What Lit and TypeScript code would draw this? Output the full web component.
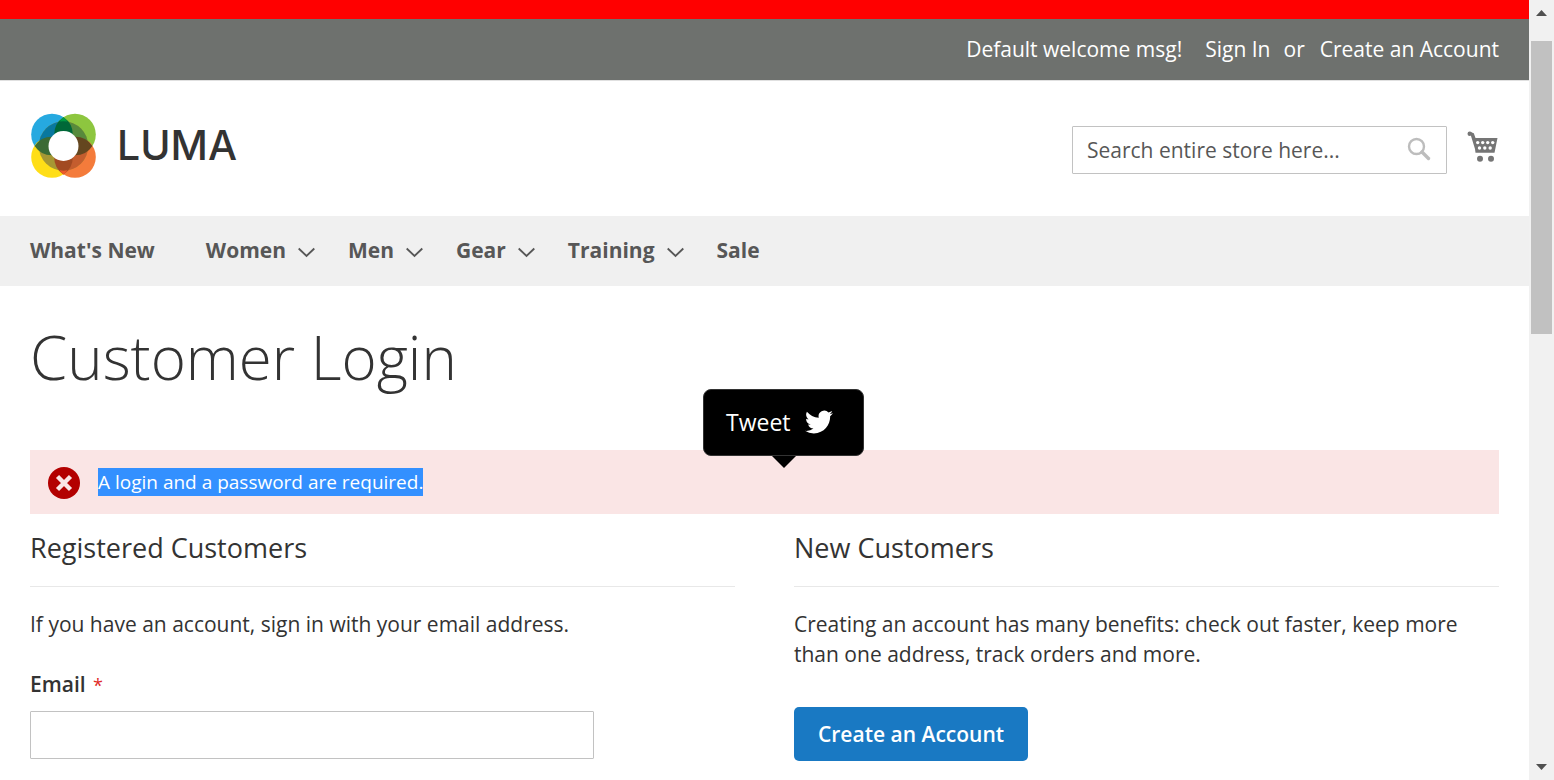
import { LitElement, html, css, nothing } from "lit";
import { customElement } from "lit/decorators.js";

interface NavEntry {
  label: string;
  submenu: boolean;
}

const NAV: NavEntry[] = [
  { label: "What's New", submenu: false },
  { label: "Women", submenu: true },
  { label: "Men", submenu: true },
  { label: "Gear", submenu: true },
  { label: "Training", submenu: true },
  { label: "Sale", submenu: false },
];

@customElement("luma-header")
export class LumaHeader extends LitElement {
  static styles = css`
    :host {
      display: block;
    }
    a {
      color: inherit;
      text-decoration: none;
    }
    .notice {
      height: 19px;
      background: #ff0000;
    }
    .panel {
      display: flex;
      justify-content: flex-end;
      align-items: center;
      box-sizing: border-box;
      height: 62px;
      padding: 0 30px 2px;
      background: #6e716e;
      border-bottom: 1px solid #e0e0e0;
      color: #fff;
      line-height: 30px;
    }
    .welcome {
      margin-right: 23px;
    }
    .or {
      margin: 0 15px 0 13px;
    }
    .brand-row {
      display: flex;
      align-items: center;
      height: 135px;
      padding: 0 30px;
    }
    .logo {
      display: block;
      margin: 2px auto 0 0;
    }
    .wordmark {
      font-family: Inter, sans-serif;
      font-size: 41px;
      font-weight: 500;
      fill: #333;
    }
    .search {
      display: flex;
      align-items: center;
      box-sizing: border-box;
      width: 375px;
      height: 48px;
      margin: 2px 20px 0 0;
      border: 1px solid #c2c2c2;
      border-radius: 1px;
    }
    .search input {
      flex: 1;
      min-width: 0;
      padding: 0 0 0 14px;
      border: 0;
      outline: 0;
      background: none;
      font: inherit;
      font-weight: 400;
      line-height: 30px;
      color: #333;
    }
    .search input::placeholder {
      color: #575757;
      opacity: 1;
    }
    .search button {
      padding: 0 14px 0 8px;
      border: 0;
      background: none;
    }
    .search svg,
    .cart svg {
      display: block;
    }
    .cart {
      margin-bottom: 4px;
    }
    nav {
      display: flex;
      align-items: center;
      gap: 33px;
      box-sizing: border-box;
      height: 70px;
      padding: 0 30px 2px;
      background: #f0f0f0;
    }
    .entry {
      display: flex;
      align-items: center;
      gap: 12px;
      font-weight: 700;
      color: #575757;
      line-height: 30px;
    }
    .plain {
      padding-right: 18px;
    }
    .chevron {
      margin-top: 4px;
    }
  `;

  render() {
    return html`
      <div class="notice"></div>
      <div class="panel">
        <span class="welcome">Default welcome msg!</span>
        <a href="#signin">Sign In</a>
        <span class="or">or</span>
        <a href="#create">Create an Account</a>
      </div>
      <div class="brand-row">
        <a class="logo" href="#home" aria-label="Luma">
          <svg width="220" height="66" viewBox="0 0 220 66">
            <circle cx="22" cy="21.500" r="20.800" fill="#26a9e0" />
            <circle cx="45" cy="21.500" r="20.800" fill="#8dc63f" />
            <circle cx="22" cy="44" r="20.800" fill="#ffde17" />
            <circle cx="45" cy="44" r="20.800" fill="#f47b3b" />
            <circle cx="33.500" cy="33" r="24.700" fill="#a69734" />
            <path d="M33.500 33V8.300A24.700 24.700 0 0 0 8.800 33Z" fill="#08789f" />
            <path d="M33.500 33V8.300A24.700 24.700 0 0 1 58.200 33Z" fill="#578a3c" />
            <path d="M33.500 33V57.700A24.700 24.700 0 0 0 58.200 33Z" fill="#c45d2e" />
            <path d="M33.500 4.200A20.800 20.800 0 0 1 42.800 21.500L33.500 33L24.200 21.500A20.800 20.800 0 0 1 33.500 4.200Z" fill="#006838" />
            <path d="M33.500 4.200Q36 6 37.500 8.600Q33.500 8 29.500 8.600Q31 6 33.500 4.200Z" fill="#009a44" />
            <path d="M33.500 61.500A20.800 20.800 0 0 0 42.800 44L33.500 33L24.200 44A20.800 20.800 0 0 0 33.500 61.500Z" fill="#a24a22" />
            <path d="M33.500 61.500Q31 59.600 29.500 57.300Q33.500 58 37.500 57.300Q36 59.600 33.500 61.500Z" fill="#ef5a28" />
            <path d="M4.600 33A20.800 20.800 0 0 0 22 42.300L33.500 33L22 23.700A20.800 20.800 0 0 0 4.600 33Z" fill="#3b6b35" />
            <path d="M62.400 33A20.800 20.800 0 0 1 45 42.300L33.500 33L45 23.700A20.800 20.800 0 0 1 62.400 33Z" fill="#64461f" />
            <circle cx="33.500" cy="33" r="15" fill="#fff" />
            <text class="wordmark" x="87" y="47">LUMA</text>
          </svg>
        </a>
        <form class="search" role="search">
          <input type="text" aria-label="Search" placeholder="Search entire store here..." />
          <button type="button" aria-label="Search">
            <svg width="26" height="26" viewBox="0 0 26 26" fill="none" stroke="#bdbdbd">
              <circle cx="10.500" cy="9.500" r="7.500" stroke-width="2.400" />
              <path d="M16 15L22.500 21.500" stroke-width="3.400" stroke-linecap="round" />
            </svg>
          </button>
        </form>
        <a class="cart" href="#cart" aria-label="My Cart">
          <svg width="32" height="32" viewBox="0 0 32 32" fill="#757575">
            <circle cx="2.700" cy="2.700" r="2.200" />
            <path d="M3 .800L6.800 2.300L8.500 7H30.500L27.500 21.700H8.500L8 18L4 5Z" />
            <g fill="#fff">
              <circle cx="10.700" cy="11.600" r="1.700" />
              <circle cx="15.700" cy="11.600" r="1.700" />
              <circle cx="20.700" cy="11.600" r="1.700" />
              <circle cx="25.700" cy="11.600" r="1.700" />
              <circle cx="12.500" cy="17" r="1.700" />
              <circle cx="17.800" cy="17" r="1.700" />
              <circle cx="23.200" cy="17" r="1.700" />
            </g>
            <circle cx="13" cy="27.800" r="3" />
            <circle cx="24" cy="27.800" r="3" />
          </svg>
        </a>
      </div>
      <nav>
        ${NAV.map(
          (n) => html`
            <a class="entry ${n.submenu ? "" : "plain"}" href="#nav">
              ${n.label}
              ${n.submenu
                ? html`<svg class="chevron" width="17" height="11" viewBox="0 0 17 11" fill="none" stroke="#575757" stroke-width="1.800">
                    <path d="M.700 1.500L8.500 9L16.300 1.500" />
                  </svg>`
                : nothing}
            </a>
          `,
        )}
      </nav>
    `;
  }
}

@customElement("tweet-tip")
export class TweetTip extends LitElement {
  static styles = css`
    :host {
      display: block;
    }
    .bubble {
      display: flex;
      align-items: center;
      gap: 14px;
      box-sizing: border-box;
      width: 161px;
      height: 67px;
      padding: 0 22px 2px;
      border: 1px solid #333;
      border-radius: 8px;
      background: #000;
      color: #fff;
      font: 400 23px "Open Sans", sans-serif;
      cursor: pointer;
    }
    .arrow {
      width: 0;
      margin: 0 auto;
      border: 12px solid transparent;
      border-top-color: #000;
      border-bottom: 0;
    }
  `;

  render() {
    return html`
      <button class="bubble" type="button">
        Tweet
        <svg width="28" height="24" viewBox="0 2 24 20" fill="#fff" aria-hidden="true">
          <path
            d="M23.950 4.570a10 10 0 0 1-2.820.770 4.960 4.960 0 0 0 2.160-2.720c-.950.560-2 .960-3.130 1.180a4.920 4.920 0 0 0-8.380 4.480C7.690 8.100 4.070 6.130 1.640 3.160a4.820 4.820 0 0 0-.670 2.480c0 1.710.870 3.210 2.190 4.100a4.900 4.900 0 0 1-2.230-.620v.060a4.920 4.920 0 0 0 3.950 4.830 5 5 0 0 1-2.210.080 4.940 4.940 0 0 0 4.600 3.420A9.870 9.870 0 0 1 0 19.540a13.990 13.990 0 0 0 7.550 2.210c9.050 0 14-7.500 14-13.980 0-.210 0-.420-.020-.630a9.940 9.940 0 0 0 2.460-2.550z"
          />
        </svg>
      </button>
      <div class="arrow"></div>
    `;
  }
}

@customElement("app-root")
export class AppRoot extends LitElement {
  static styles = css`
    :host {
      display: grid;
      grid-template-columns: minmax(0, 1fr) 25px;
      height: 100vh;
      overflow: hidden;
      background: #fff;
      color: #333;
      font-family: "Open Sans", sans-serif;
      font-size: 21px;
      line-height: 30px;
    }
    main {
      padding: 0 30px;
    }
    h1 {
      margin: 38px 0 60px;
      font-size: 60px;
      font-weight: 300;
      line-height: 66px;
    }
    h2 {
      margin: 0 0 22px;
      padding-bottom: 24px;
      border-bottom: 1px solid #e8e8e8;
      font-size: 27px;
      font-weight: 400;
      line-height: 28px;
    }
    p {
      margin: 0;
    }
    .alert {
      position: relative;
      display: flex;
      align-items: center;
      gap: 18px;
      height: 64px;
      padding-left: 18px;
      background: #fae5e5;
      font-size: 19px;
      line-height: 28px;
    }
    .tip {
      position: absolute;
      left: 673px;
      bottom: 46px;
    }
    .alert-icon {
      margin-top: 2px;
    }
    .selected {
      background: #3390ff;
      color: #fff;
    }
    .columns {
      display: grid;
      grid-template-columns: 1fr 1fr;
      gap: 59px;
      padding-top: 20px;
    }
    .label {
      display: block;
      margin: 30px 0 11px;
      font-weight: 600;
    }
    .required {
      margin-left: 2px;
      color: #e02b27;
      font-size: 18px;
      font-weight: 400;
    }
    .field {
      display: block;
      box-sizing: border-box;
      width: 80%;
      height: 48px;
      padding: 0 14px;
      border: 1px solid #c2c2c2;
      border-radius: 1px;
      font: inherit;
    }
    .primary {
      height: 54px;
      margin-top: 38px;
      padding: 0 24px;
      border: 0;
      border-radius: 5px;
      background: #1979c3;
      color: #fff;
      font: inherit;
      font-weight: 600;
    }
    .scrollbar {
      display: flex;
      flex-direction: column;
      align-items: center;
      height: 100vh;
      background: #f1f1f1;
    }
    .thumb {
      width: 21px;
      height: 293px;
      margin-bottom: auto;
      background: #c1c1c1;
    }
    .up {
      margin: 10px 0 25px;
    }
    .down {
      margin-bottom: 10px;
    }
  `;

  render() {
    return html`
      <div>
        <luma-header></luma-header>
        <main>
          <h1>Customer Login</h1>
          <div class="alert" role="alert">
            <svg class="alert-icon" width="32" height="32" viewBox="0 0 32 32">
              <circle cx="16" cy="16" r="16" fill="#b30000" />
              <path d="M9.500 9.500L22.500 22.500M22.500 9.500L9.500 22.500" stroke="#fae5e5" stroke-width="4.400" />
            </svg>
            <span class="selected">A login and a password are required.</span>
            <tweet-tip class="tip"></tweet-tip>
          </div>
          <div class="columns">
            <section>
              <h2>Registered Customers</h2>
              <p>If you have an account, sign in with your email address.</p>
              <label class="label" for="email">Email <span class="required">*</span></label>
              <input class="field" id="email" type="email" />
            </section>
            <section>
              <h2>New Customers</h2>
              <p>
                Creating an account has many benefits: check out faster, keep more than one address, track orders and
                more.
              </p>
              <button class="primary" type="button">Create an Account</button>
            </section>
          </div>
        </main>
      </div>
      <div class="scrollbar" aria-hidden="true">
        <svg class="up" width="11" height="6" viewBox="0 0 11 6"><path d="M0 6L5.500 0L11 6Z" fill="#505050" /></svg>
        <div class="thumb"></div>
        <svg class="down" width="11" height="6" viewBox="0 0 11 6"><path d="M0 0L5.500 6L11 0Z" fill="#505050" /></svg>
      </div>
    `;
  }
}
